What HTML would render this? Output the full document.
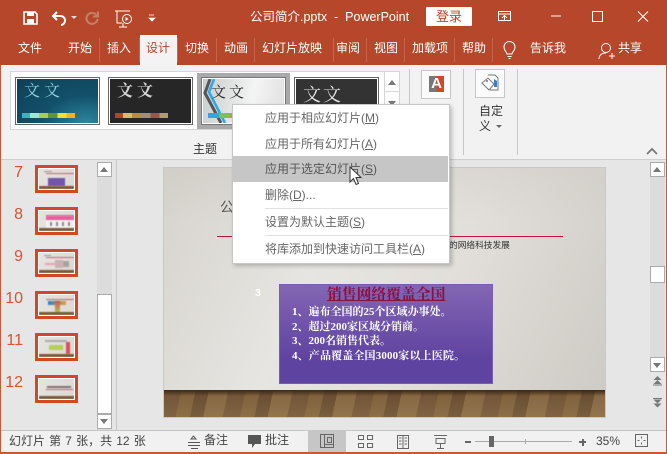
<!DOCTYPE html>
<html><head><meta charset="utf-8"><style>
html,body{margin:0;padding:0}
body{width:667px;height:454px;overflow:hidden;position:relative;background:#e6e6e6;font-family:"Liberation Sans","Noto Sans CJK SC",sans-serif;font-size:12px;color:#444}
div,span,svg{position:absolute;box-sizing:border-box}
.t{white-space:nowrap;line-height:16px}
.tab{color:#fff;top:40px;white-space:nowrap;line-height:16px;font-size:12px}
.sep{top:38px;width:1px;height:24px;background:#c5654b}
.th{left:35px;width:43px;height:28px;border:3px solid #d24726;background:linear-gradient(110deg,#e6e4df,#dcd9d3)}
.th:before{content:"";position:absolute;inset:0;border:1px solid #fff;z-index:2}
.th div{filter:blur(.5px)}
.wood{left:1px;right:1px;bottom:1px;height:3px;background:#7a5a38}
.rl{left:8px;top:5px;height:1px;background:#c4637a}
.num{color:#d9532f;font-size:16px;line-height:18px;text-align:right;width:23px;left:0}
.sb{background:#fff;border:1px solid #ababab}
.tri{width:0;height:0;border-left:4px solid transparent;border-right:4px solid transparent}
.mi{left:265px;white-space:nowrap;font-size:12px;color:#666;line-height:16px}
.mi u{text-underline-offset:1px}
.slt{color:#fff;font-family:"Liberation Serif","Noto Serif CJK SC",serif;font-weight:700;font-size:11px;line-height:14px;white-space:nowrap}
</style></head><body>
<!-- title bar -->
<div style="left:0;top:0;width:667px;height:65px;background:#b7472a"></div>
<svg style="left:0;top:0" width="667" height="36" fill="none">
<path d="M24 12h11l2 2v10H24z" fill="none" stroke="#fff" stroke-width="1.600"/><rect x="27" y="12" width="7" height="4" fill="#fff"/><rect x="27" y="19" width="7" height="5" fill="#fff"/>
<path d="M57 12l-4 4 4 4M53 16h7a4.500 4.500 0 0 1 1 9" stroke="#fff" stroke-width="2"/>
<path d="M71 16h6l-3 3z" fill="#ddd"/>
<path d="M98 11.500v5h-5M97 16a5.500 5.500 0 1 0 .5 3" stroke="#c5806a" stroke-width="2"/>
<path d="M115 11h15M117 11v12h5M123 23v4h-4h8" stroke="#fff"/><circle cx="127" cy="19" r="4.500" stroke="#fff"/><path d="M125.500 17l3 2-3 2z" fill="#fff"/>
<path d="M149 15h5M149 18h6l-3 3z" fill="#fff" stroke="#fff" stroke-width=".8"/>
<rect x="498.500" y="11.500" width="12" height="9" stroke="#fff"/><path d="M498 14h13M504.500 20v-4M502 18l2.500-2.500L507 18" stroke="#fff"/>
<path d="M551 16h10" stroke="#fff"/><rect x="592.500" y="11.500" width="10" height="10" stroke="#fff"/>
<path d="M638 11.500l10 10M648 11.500l-10 10" stroke="#fff"/>
</svg>
<div class="t" style="left:250px;top:9px;color:#fff;font-size:12.500px">公司简介.pptx&nbsp; -&nbsp; PowerPoint</div>
<div class="t" style="left:426px;top:7px;width:46px;height:19px;background:#fff;color:#b7472a;text-align:center;font-size:13px;line-height:19px;border-radius:1px">登录</div>
<!-- tabs -->
<div class="tab" style="left:18px">文件</div>
<div class="tab" style="left:68px">开始</div><div class="sep" style="left:99px"></div>
<div class="tab" style="left:107px">插入</div><div class="sep" style="left:139px"></div>
<div style="left:140px;top:35px;width:37px;height:31px;background:#f3f3f3"></div>
<div class="tab" style="left:146px;color:#b7472a">设计</div><div class="sep" style="left:177px"></div>
<div class="tab" style="left:185px">切换</div><div class="sep" style="left:216px"></div>
<div class="tab" style="left:224px">动画</div><div class="sep" style="left:254px"></div>
<div class="tab" style="left:262px">幻灯片放映</div><div class="sep" style="left:333px"></div>
<div class="tab" style="left:336px">审阅</div><div class="sep" style="left:366px"></div>
<div class="tab" style="left:374px">视图</div><div class="sep" style="left:404px"></div>
<div class="tab" style="left:412px">加载项</div><div class="sep" style="left:454px"></div>
<div class="tab" style="left:462px">帮助</div><div class="sep" style="left:492px"></div>
<svg style="left:500px;top:40px" width="20" height="20" fill="none" stroke="#fff"><path d="M7 14c0-2-3-3-3-7a5.500 5.500 0 0 1 11 0c0 4-3 5-3 7zM7.500 16.500h4M8.500 18.500h2"/></svg>
<div class="tab" style="left:530px">告诉我</div>
<svg style="left:597px;top:41px" width="20" height="20" fill="none" stroke="#fff"><circle cx="9" cy="7" r="4.500"/><path d="M2 18c0-4 3-6 7-6M12 15h6M15 12v6"/></svg>
<div class="tab" style="left:618px">共享</div>
<!-- ribbon -->
<div style="left:0;top:65px;width:667px;height:95px;background:#f2f2f2;border-bottom:1px solid #cfcfcf"></div>
<div style="left:10px;top:71px;width:390px;height:59px;background:#fff;border:1px solid #d5d5d5"></div>
<!-- theme 1 -->
<div style="left:15px;top:77px;width:85px;height:48px;border:1px solid #666"></div>
<div style="left:17px;top:79px;width:81px;height:44px;background:radial-gradient(ellipse at 85% 100%,#2e86a0,#12506a 45%,#0f4057)"></div>
<div class="t" style="left:24px;top:84px;color:#8fd3df;font-family:'Liberation Serif','Noto Serif CJK SC',serif;font-size:16px;letter-spacing:4px">文文</div>
<div style="left:22px;top:113px;height:5px;width:53px;background:linear-gradient(90deg,#3eb0c0 0 15%,#9ae8d6 15% 32%,#a4d04a 32% 49%,#5f9446 49% 67%,#f6de3a 67% 84%,#ffb020 84%)"></div>
<!-- theme 2 -->
<div style="left:108px;top:77px;width:85px;height:48px;border:1px solid #666"></div>
<div style="left:110px;top:79px;width:81px;height:44px;background:#262626"></div>
<div class="t" style="left:117px;top:84px;color:#d4d4d4;font-family:'Liberation Serif','Noto Serif CJK SC',serif;font-size:16px;font-weight:700;letter-spacing:4px">文文</div>
<div style="left:115px;top:113px;height:5px;width:53px;background:linear-gradient(90deg,#b9431d 0 15%,#dcbb65 15% 32%,#bd8b40 32% 49%,#a98b6f 49% 67%,#a05540 67% 84%,#b09c74 84%)"></div>
<!-- theme 3 -->
<div style="left:197px;top:73px;width:93px;height:56px;background:#a9a9a9"></div>
<div style="left:201px;top:77px;width:85px;height:48px;border:1px solid #777;background:#fff"></div>
<div style="left:203px;top:79px;width:81px;height:44px;background:linear-gradient(100deg,#c8cccc,#f4f4f4 60%,#e0e0e0);overflow:hidden"></div>
<svg style="left:203px;top:79px" width="40" height="44" fill="none"><path d="M7 0L2 14l16 30" stroke="#555" stroke-width="3"/><path d="M11 0L6 13l16 31" stroke="#2ca7ee" stroke-width="2.500"/></svg>
<div class="t" style="left:211px;top:85px;color:#222;font-family:'Liberation Serif','Noto Serif CJK SC',serif;font-size:15px;letter-spacing:3px">文文</div>
<div style="left:208px;top:113px;height:5px;width:34px;background:linear-gradient(90deg,#2ca7ee 0 33%,#7fc24b 33% 66%,#e0922d 66%)"></div>
<!-- theme 4 -->
<div style="left:294px;top:77px;width:85px;height:48px;border:1px solid #666;background:#fff"></div>
<div style="left:296px;top:79px;width:81px;height:44px;background:#333"></div>
<div class="t" style="left:303px;top:84px;color:#e8e8e8;font-family:'Liberation Serif','Noto Serif CJK SC',serif;font-size:18px;line-height:22px;letter-spacing:2px">文文</div>
<!-- gallery scroll -->
<div style="left:384px;top:71px;width:16px;height:59px;background:#fff;border:1px solid #d5d5d5"></div>
<div style="left:384px;top:91px;width:16px;height:1px;background:#d5d5d5"></div>
<div class="tri" style="left:388px;top:80px;border-bottom:5px solid #777"></div>
<div class="tri" style="left:388px;top:101px;border-top:5px solid #777"></div>
<div class="t" style="left:193px;top:141px;color:#333;font-size:12px">主题</div>
<div style="left:409px;top:69px;width:1px;height:84px;background:#c6c6c6"></div>
<!-- variant A -->
<div style="left:421px;top:70px;width:30px;height:29px;background:#fbfbfb;border:1px solid #c6c6c6"></div>
<div style="left:429px;top:76px;width:15px;height:16px;background:linear-gradient(90deg,#777 0 50%,#d24726 50%);color:#fff;font-weight:700;font-size:15px;line-height:16px;text-align:center">A</div>
<div style="left:463px;top:69px;width:1px;height:86px;background:#c6c6c6"></div>
<div style="left:475px;top:69px;width:30px;height:29px;background:#fbfbfb;border:1px solid #c6c6c6"></div>
<svg style="left:481px;top:74px" width="19" height="19" fill="none"><path d="M7 1h7l3 3v12H9" stroke="#777"/><path d="M1 9l6-5 6 6-5 6z" fill="#fff" stroke="#777"/><path d="M13 5l3 2v6h-3z" fill="#3e7fc1"/><circle cx="6" cy="7" r="1" fill="#777"/></svg>
<div class="t" style="left:479px;top:104px;color:#333;font-size:12px;width:24px;line-height:15px">自定</div>
<div class="t" style="left:479px;top:119px;color:#333;font-size:12px;line-height:15px">义</div>
<div class="tri" style="left:496px;top:125px;border-left-width:3px;border-right-width:3px;border-top:3px solid #666"></div>
<div style="left:517px;top:69px;width:1px;height:86px;background:#c6c6c6"></div>
<svg style="left:646px;top:147px" width="12" height="8" fill="none"><path d="M1 7l5-5 5 5" stroke="#777" stroke-width="1.800"/></svg>
<!-- left pane -->
<div style="left:0;top:65px;width:1px;height:387px;background:#c9583b"></div>
<div style="left:666px;top:65px;width:1px;height:387px;background:#c9583b"></div>
<div class="num" style="top:164px">7</div>
<div class="num" style="top:206px">8</div>
<div class="num" style="top:248px">9</div>
<div class="num" style="top:290px">10</div>
<div class="num" style="top:332px">11</div>
<div class="num" style="top:374px">12</div>
<div class="th" style="top:165px"><div style="left:6px;top:3px;width:8px;height:1px;background:#999"></div><div class="rl" style="width:28px"></div><div style="left:10px;top:10px;width:17px;height:8px;background:#7355ac"></div><div class="wood"></div></div>
<div class="th" style="top:207px"><div class="rl" style="width:28px"></div><div style="left:8px;top:6px;width:28px;height:13px;background:linear-gradient(#e85f9c 0 30%,#f6f0f2 30%)"></div><div style="left:12px;top:12px;width:22px;height:4px;background:repeating-linear-gradient(90deg,#888 0 2px,transparent 2px 6px)"></div><div class="wood"></div></div>
<div class="th" style="top:249px"><div style="left:6px;top:3px;width:7px;height:1px;background:#999"></div><div class="rl" style="width:28px"></div><div style="left:7px;top:11px;width:12px;height:2px;background:#eda0b0"></div><div style="left:17px;top:8px;width:8px;height:8px;background:#ccb0b4"></div><div style="left:25px;top:9px;width:6px;height:6px;background:#a9a29c"></div><div class="wood"></div></div>
<div class="th" style="top:291px"><div class="rl" style="width:28px"></div><div style="left:10px;top:7px;width:18px;height:4px;background:linear-gradient(90deg,#2f7fd0,#e0a030)"></div><div style="left:17px;top:7px;width:5px;height:12px;background:linear-gradient(#e05050,#a8c848)"></div><div class="wood"></div></div>
<div class="th" style="top:333px"><div style="left:7px;top:4px;width:22px;height:2px;background:#aaa"></div><div style="left:11px;top:9px;width:14px;height:5px;background:#b4cf5a"></div><div style="left:28px;top:6px;width:4px;height:12px;background:#d9505a"></div><div class="wood"></div></div>
<div class="th" style="top:375px"><div style="left:9px;top:8px;width:24px;height:2px;background:#777"></div><div class="rl" style="top:11px;width:27px"></div><div class="wood"></div></div>
<div style="left:97px;top:162px;width:15px;height:268px;background:#dcdcdc"></div>
<div class="sb" style="left:97px;top:162px;width:15px;height:15px"></div>
<div class="tri" style="left:100px;top:167px;border-bottom:5px solid #777"></div>
<div class="sb" style="left:97px;top:294px;width:15px;height:120px"></div>
<div class="sb" style="left:97px;top:414px;width:15px;height:15px"></div>
<div class="tri" style="left:100px;top:419px;border-top:5px solid #777"></div>
<div style="left:116px;top:160px;width:1px;height:270px;background:#c6c6c6"></div>
<!-- slide -->
<div style="left:163px;top:167px;width:443px;height:251px;background:#c8c8c8"></div>
<div style="left:164px;top:168px;width:441px;height:249px;background:linear-gradient(115deg,#d6d3cd 0,#e7e5e1 35%,#e2dfda 60%,#cdcac4 100%);overflow:hidden"></div>
<div style="left:164px;top:168px;width:441px;height:60px;background:linear-gradient(#c9c6c0,rgba(201,198,192,0) 90%);opacity:.35"></div>
<div class="t" style="left:220px;top:199px;color:#555;font-size:14px">公</div>
<div style="left:217px;top:236px;width:346px;height:1px;background:#c8143c"></div>
<div class="t" style="left:449px;top:237px;color:#333;font-size:8.700px;line-height:16px">的网络科技发展</div>
<div class="t" style="left:255px;top:285px;color:#fff;font-weight:700;font-size:10.500px">3</div>
<div style="left:279px;top:284px;width:214px;height:100px;background:linear-gradient(#8366b3,#5f43a0 75%,#5f43a0);border:1px solid #7a5cb4"></div>
<div class="t" style="left:327px;top:286px;color:#8a1040;font-family:'Liberation Serif','Noto Serif CJK SC',serif;font-size:14.800px;font-weight:700;line-height:18px;text-decoration:underline">销售网络覆盖全国</div>
<div class="slt" style="left:292px;top:305px">1、遍布全国的25个区域办事处。</div>
<div class="slt" style="left:292px;top:320px">2、超过200家区域分销商。</div>
<div class="slt" style="left:292px;top:334px">3、200名销售代表。</div>
<div class="slt" style="left:292px;top:349px;letter-spacing:.15px">4、产品覆盖全国3000家以上医院。</div>
<div style="left:164px;top:390px;width:441px;height:27px;background:linear-gradient(rgba(50,33,15,.1),rgba(170,145,105,.2)),repeating-linear-gradient(102deg,#76583a 0 17px,#85663f 17px 31px,#6d5034 31px 44px,#8c6d46 44px 63px)"></div>
<div style="left:164px;top:390px;width:441px;height:6px;background:linear-gradient(#3a2813,rgba(58,40,19,0))"></div>
<!-- right scroll -->
<div style="left:650px;top:162px;width:15px;height:209px;background:#dcdcdc"></div>
<div class="sb" style="left:650px;top:162px;width:15px;height:15px"></div>
<div class="tri" style="left:653px;top:167px;border-bottom:5px solid #777"></div>
<div class="sb" style="left:650px;top:266px;width:15px;height:17px"></div>
<div class="sb" style="left:650px;top:357px;width:15px;height:15px"></div>
<div class="tri" style="left:653px;top:363px;border-top:5px solid #777"></div>
<svg style="left:653px;top:376px" width="10" height="32" fill="#777"><path d="M4.500 0l4 4H.5zM4.500 4l4 4H.5zM0 8.500h9v1H0zM0 22h9v1H0zM.5 23.500h8l-4 4zM.5 27.500h8l-4 4z"/></svg>
<!-- menu -->
<div style="left:232px;top:104px;width:218px;height:160px;background:#fff;border:1px solid #c6c6c6;box-shadow:2px 2px 4px rgba(0,0,0,.22)"></div>
<div style="left:233px;top:156px;width:215px;height:26px;background:#c6c6c6"></div>
<div class="mi" style="top:110px">应用于相应幻灯片(<u>M</u>)</div>
<div class="mi" style="top:136px">应用于所有幻灯片(<u>A</u>)</div>
<div class="mi" style="top:161px;color:#555">应用于选定幻灯片(<u>S</u>)</div>
<div class="mi" style="top:187px">删除(<u>D</u>)...</div>
<div style="left:265px;top:208px;width:183px;height:1px;background:#e1e1e1"></div>
<div class="mi" style="top:214px">设置为默认主题(<u>S</u>)</div>
<div style="left:265px;top:235px;width:183px;height:1px;background:#e1e1e1"></div>
<div class="mi" style="top:241px">将库添加到快速访问工具栏(<u>A</u>)</div>
<svg style="left:349px;top:166px" width="14" height="20"><path d="M1 1v15l3.500-3.500 2.500 6 2.500-1-2.500-6H12z" fill="#fff" stroke="#333" stroke-width="1"/></svg>
<!-- status -->
<div style="left:1px;top:430px;width:665px;height:22px;background:#f1f1f1;border-top:1px solid #c6c6c6"></div>
<div style="left:0;top:452px;width:667px;height:2px;background:#c9583b"></div>
<div class="t" style="left:9px;top:433px;color:#444;font-size:12px;word-spacing:.8px">幻灯片 第 7 张，共 12 张</div>
<svg style="left:186px;top:434px" width="16" height="16" fill="none" stroke="#555"><path d="M5 5h5l-2.500-3zM2 8.500h12M2 11.500h12M5 14.500h7"/></svg>
<div class="t" style="left:204px;top:432px;color:#444">备注</div>
<svg style="left:247px;top:434px" width="16" height="15"><path d="M1 1h13v9H8l-3 4v-4H1z" fill="#555"/></svg>
<div class="t" style="left:265px;top:432px;color:#444">批注</div>
<div style="left:308px;top:431px;width:38px;height:21px;background:#c6c6c6"></div>
<svg style="left:300px;top:430px" width="240" height="22" fill="none" stroke="#666"><path d="M20.500 4.500h13v13h-13zM24.500 4.500v13M27.500 7.500h4v5h-4zM24.500 14.500h9"/><path d="M58.500 5.500h5v4h-5zM67.500 5.500h5v4h-5zM58.500 13.500h5v4h-5zM67.500 13.500h5v4h-5z"/><path d="M97.500 5.500h11v13h-11zM103 5.500v13M99 8h2.500M99 11h2.500M99 14h2.500M104.500 8h2.500M104.500 11h2.500M104.500 14h2.500"/><path d="M134 5.500h13M136 8.500h9v5h-9zM140.500 13.500v5M137 18.500h7" stroke-width="1"/></svg>
<div style="left:465px;top:441px;width:6px;height:2px;background:#666"></div>
<div style="left:475px;top:441px;width:97px;height:1px;background:#aaa"></div>
<div style="left:525px;top:439px;width:1px;height:5px;background:#aaa"></div>
<div style="left:489px;top:436px;width:5px;height:11px;background:#666"></div>
<div style="left:579px;top:441px;width:7px;height:2px;background:#666"></div>
<div style="left:581.500px;top:438.500px;width:2px;height:7px;background:#666"></div>
<div class="t" style="left:596px;top:433px;color:#444;font-size:12px">35%</div>
<svg style="left:635px;top:434px" width="14" height="14" fill="none" stroke="#666"><path d="M.5.500h12v12H.5z"/><path d="M6.500 2.500v2M6.500 8.500v2M2.500 6.500h2M8.500 6.500h2" stroke-width="1"/></svg>
</body></html>
